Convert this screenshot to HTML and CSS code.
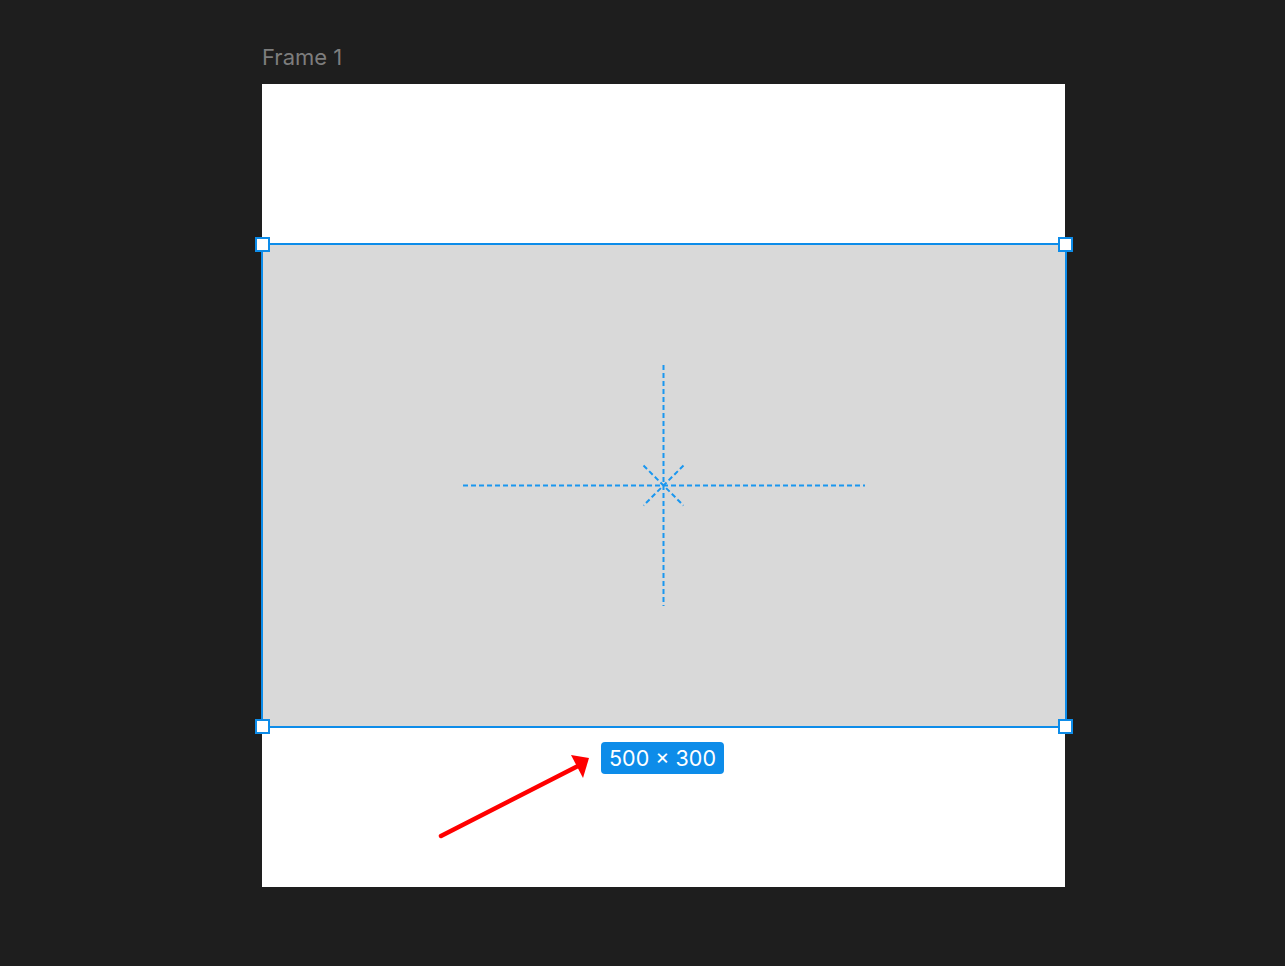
FILE: index.html
```html
<!DOCTYPE html>
<html lang="en">
<head>
    <meta charset="UTF-8">
    <meta name="viewport" content="width=device-width, initial-scale=1.0">
    <title>Frame 1</title>
    <link rel="stylesheet" href="styles.css">
</head>
<body>
    <div class="canvas">
        <div class="frame-label">Frame 1</div>
        <div class="frame">
            <!-- selected rectangle -->
            <div class="selection">
                <span class="handle tl"></span>
                <span class="handle tr"></span>
                <span class="handle bl"></span>
                <span class="handle br"></span>
            </div>

            <!-- centre guides + arrow -->
            <svg class="overlay" width="803" height="803" viewBox="0 0 803 803">
                <g class="guides">
                    <line x1="401.5" y1="281" x2="401.5" y2="522"/>
                    <line x1="201" y1="401.5" x2="603" y2="401.5"/>
                    <line x1="381.5" y1="381.5" x2="421.5" y2="421.5"/>
                    <line x1="421.5" y1="381.5" x2="381.5" y2="421.5"/>
                </g>
                <line class="arrow-line" x1="179" y1="752" x2="316" y2="682"/>
                <polygon class="arrow-head" points="309,671 327,674 321,694"/>
            </svg>

            <div class="size-label">500 × 300</div>
        </div>
    </div>
</body>
</html>
```

FILE: styles.css
```css
body {
    margin: 0;
    padding: 0;
    background-color: #1e1e1e;
    font-family: Inter, "Noto Sans", sans-serif;
    height: 966px;
    overflow: hidden;
}
.canvas {
    padding: 44px 0 0 262px;
}
.frame-label {
    color: #7d7d7d;
    font-size: 22px;
    line-height: 26px;
    height: 26px;
    margin-bottom: 14px;
}
.frame {
    position: relative;
    width: 803px;
    height: 803px;
    background: white;
}
.selection {
    position: absolute;
    left: -1px;
    top: 159px;
    width: 806px;
    height: 485px;
    box-sizing: border-box;
    background: #d9d9d9;
    border: 2px solid #0d8ce9;
}
.handle {
    position: absolute;
    width: 15px;
    height: 15px;
    box-sizing: border-box;
    background: white;
    border: 2px solid #0d8ce9;
    z-index: 2;
}
.handle.tl { left: -8px; top: -8px; }
.handle.tr { right: -8px; top: -8px; }
.handle.bl { left: -8px; bottom: -8px; }
.handle.br { right: -8px; bottom: -8px; }
.overlay {
    position: absolute;
    left: 0;
    top: 0;
}
.guides line {
    stroke: #1a97f0;
    stroke-width: 2;
    stroke-dasharray: 5 3;
}
.arrow-line {
    stroke: #ff0000;
    stroke-width: 4.5;
    stroke-linecap: round;
}
.arrow-head {
    fill: #ff0000;
}
.size-label {
    position: absolute;
    left: 339px;
    top: 658px;
    width: 123px;
    height: 32px;
    background: #0d8ce9;
    border-radius: 4px;
    color: white;
    font-size: 21.5px;
    line-height: 33px;
    text-align: center;
}
```
